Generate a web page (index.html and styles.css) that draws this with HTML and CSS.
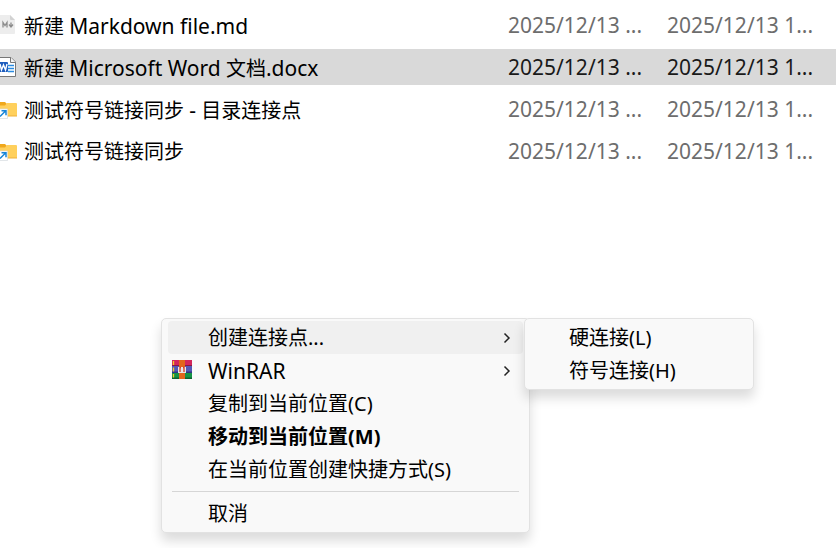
FILE: index.html
```html
<!DOCTYPE html>
<html lang="zh-CN">
<head>
    <meta charset="UTF-8">
    <meta name="viewport" content="width=device-width, initial-scale=1.0">
    <title>文件列表</title>
    <link rel="stylesheet" href="styles.css">
</head>
<body>
    <!-- 文件列表 -->
    <table class="files">
        <colgroup>
            <col>
            <col class="col-date">
            <col class="col-last">
        </colgroup>
        <tbody>
            <tr>
                <td>
                    <div class="file">
                        <svg class="file-icon" viewBox="0 0 18 24" aria-hidden="true">
                            <path d="M0 1h10l5 5v13q0 1-1 1H0z" fill="#ededed"/>
                            <path d="M10 1l5 5h-4q-1 0-1-1z" fill="#d2d2d2"/>
                            <path d="M3 13.500v-5l2 3 2-3v5M11 8.500v4M9 10.500l2 2.500 2-2.500" fill="none" stroke="#8c8c8c" stroke-width="1.3"/>
                        </svg>
                        <span>新建 <span class="latin">Markdown file.md</span></span>
                    </div>
                </td>
                <td class="date">2025/12/13 ...</td>
                <td class="date">2025/12/13 1...</td>
            </tr>
            <tr class="selected">
                <td>
                    <div class="file">
                        <svg class="file-icon" viewBox="0 0 18 24" aria-hidden="true">
                            <path d="M-4 1.500H11l4.500 4.500v14.500H-4z" fill="#fff" stroke="#777"/>
                            <path d="M10.500 1.500v5h5" fill="#f4f4f4" stroke="#777"/>
                            <path d="M8 9.500h6M8 12.500h6M8 15.500h6" stroke="#2b8be0" stroke-width="1.300"/>
                            <path d="M0 6h7q1 0 1 1v8q0 1-1 1H0z" fill="#1d5cbd"/>
                            <path d="M0 8l1.500 6 2-5 2 5L7 8" fill="none" stroke="#fff" stroke-width="1.400"/>
                        </svg>
                        <span>新建 <span class="latin">Microsoft Word</span> 文档<span class="latin">.docx</span></span>
                    </div>
                </td>
                <td class="date">2025/12/13 ...</td>
                <td class="date">2025/12/13 1...</td>
            </tr>
            <tr>
                <td>
                    <div class="file">
                        <svg class="file-icon" viewBox="0 0 18 24" aria-hidden="true">
                            <path d="M0 4h5l2 2h9v5H0z" fill="#f0a81c"/>
                            <path d="M0 7.500h5L7 5h9q1 0 1 1v12H0z" fill="#ffd05c"/>
                            <path d="M0 18h17" stroke="#efb13a"/>
                            <path d="M0 11h7.500v9.500H0" fill="#fff" stroke="#d5dbe0" stroke-width=".7"/>
                            <path d="M0 18.500l5.500-5.500M1.500 12.700H6v4.500" fill="none" stroke="#1684d8" stroke-width="1.500"/>
                        </svg>
                        <span>测试符号链接同步 <span class="latin">-</span> 目录连接点</span>
                    </div>
                </td>
                <td class="date">2025/12/13 ...</td>
                <td class="date">2025/12/13 1...</td>
            </tr>
            <tr>
                <td>
                    <div class="file">
                        <svg class="file-icon" viewBox="0 0 18 24" aria-hidden="true">
                            <path d="M0 4h5l2 2h9v5H0z" fill="#f0a81c"/>
                            <path d="M0 7.500h5L7 5h9q1 0 1 1v12H0z" fill="#ffd05c"/>
                            <path d="M0 18h17" stroke="#efb13a"/>
                            <path d="M0 11h7.500v9.500H0" fill="#fff" stroke="#d5dbe0" stroke-width=".7"/>
                            <path d="M0 18.500l5.500-5.500M1.500 12.700H6v4.500" fill="none" stroke="#1684d8" stroke-width="1.500"/>
                        </svg>
                        <span>测试符号链接同步</span>
                    </div>
                </td>
                <td class="date">2025/12/13 ...</td>
                <td class="date">2025/12/13 1...</td>
            </tr>
        </tbody>
    </table>

    <!-- 右键菜单 -->
    <div class="menu menu-main" role="menu">
        <button type="button" class="item active" role="menuitem" aria-haspopup="true">
            <span>创建连接点...</span>
            <svg class="arrow" viewBox="0 0 8 12" aria-hidden="true"><path d="M1.500 1.500L6 6l-4.500 4.500"/></svg>
        </button>
        <button type="button" class="item" role="menuitem" aria-haspopup="true">
            <svg class="item-icon" viewBox="0 0 20 20" aria-hidden="true">
                <path d="M0 0h20v6H0z" fill="#d3265c"/>
                <path d="M0 6h20v7H0z" fill="#5358b8"/>
                <path d="M0 13h20v6H0z" fill="#159447"/>
                <path d="M0 5h20v1H0z" fill="#8c1740"/>
                <path d="M0 11.500h20V13H0z" fill="#303681"/>
                <path d="M0 17.500h20V19H0z" fill="#0c6330"/>
                <path d="M1.500 1v4M1.500 7.500v4M1.500 14v3.500" stroke="#f6c928" stroke-width="1.300"/>
                <path d="M7 0h6v19H7z" fill="#e2661c"/>
                <path d="M6 7h8v6H6z" fill="#e8e8e8"/>
                <path d="M8 12V7.500h1M12 12V7.500h-1" fill="none" stroke="#d63a25" stroke-width="1.300"/>
            </svg>
            <span class="latin">WinRAR</span>
            <svg class="arrow" viewBox="0 0 8 12" aria-hidden="true"><path d="M1.500 1.500L6 6l-4.500 4.500"/></svg>
        </button>
        <button type="button" class="item" role="menuitem">复制到当前位置(C)</button>
        <button type="button" class="item default" role="menuitem">移动到当前位置(M)</button>
        <button type="button" class="item" role="menuitem">在当前位置创建快捷方式(S)</button>
        <hr>
        <button type="button" class="item" role="menuitem">取消</button>
    </div>

    <!-- 子菜单 -->
    <div class="menu menu-sub" role="menu">
        <button type="button" class="item" role="menuitem">硬连接(L)</button>
        <button type="button" class="item" role="menuitem">符号连接(H)</button>
    </div>
</body>
</html>
```
FILE: styles.css
```css
* {
    box-sizing: border-box;
}
body {
    margin: 0;
    background: #fff;
    color: #000;
    font-family: "Noto Sans", "Noto Sans CJK SC", sans-serif;
    font-size: 20px;
    line-height: 28px;
}
.latin {
    font-size: 21px;
}
.files {
    width: 100%;
    margin-top: 1px;
    table-layout: fixed;
    border-spacing: 0 6px;
    white-space: nowrap;
}
.files td {
    height: 36px;
    padding: 2px 0 0;
}
.col-date {
    width: 159px;
}
.col-last {
    width: 169px;
}
.file {
    display: flex;
    align-items: center;
    gap: 6px;
}
.file-icon {
    width: 18px;
    height: 24px;
}
.files .date {
    padding-top: 0;
    color: #6d6d6d;
    font-size: 21px;
}
.selected {
    background: #d9d9d9;
}
.files .selected .date {
    color: #191919;
}
.menu {
    position: absolute;
    padding: 2px 6px;
    background: #f9f9f9;
    border: 1px solid #e2e2e2;
    border-radius: 5px;
    box-shadow: 0 8px 12px rgba(0, 0, 0, 0.14);
}
.menu-main {
    top: 318px;
    left: 161px;
    min-width: 369px;
}
.menu-sub {
    top: 318px;
    left: 524px;
    min-width: 230px;
}
.item {
    position: relative;
    display: flex;
    align-items: center;
    justify-content: space-between;
    width: 100%;
    height: 33px;
    padding: 0 12px 0 40px;
    border: 0;
    border-radius: 4px;
    background: none;
    color: #000;
    font: inherit;
    text-align: left;
}
.menu-sub .item {
    padding-left: 38px;
}
.item.active,
.item:hover {
    background: #f0f0f0;
}
.item.default {
    font-weight: bold;
}
.item-icon {
    position: absolute;
    top: 6px;
    left: 4px;
    width: 20px;
    height: 20px;
}
.arrow {
    width: 8px;
    height: 12px;
    fill: none;
    stroke: #222;
    stroke-width: 1.5;
}
hr {
    height: 1px;
    margin: 5px 4px;
    border: 0;
    background: #d6d6d6;
}
```
